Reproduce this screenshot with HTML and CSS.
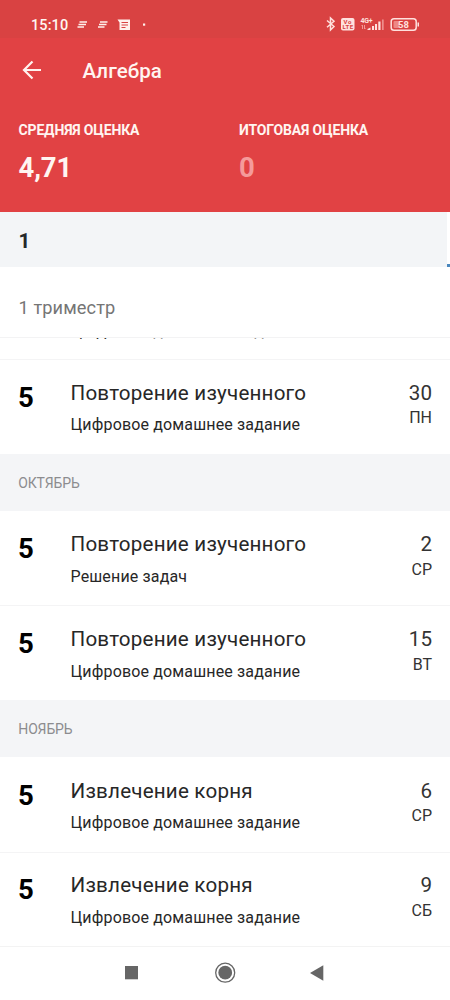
FILE: index.html
```html
<!DOCTYPE html>
<html lang="ru">
<head>
<meta charset="utf-8">
<title>Алгебра</title>
<link rel="stylesheet" href="styles.css">
</head>
<body>
<div class="screen">
  <header class="header">
    <div class="status">
      <span class="clock">15:10</span>
      <svg class="notices" width="72" height="16" viewBox="0 0 72 16">
        <g stroke="#fff0ec" stroke-width="1.5" fill="none">
          <path d="M2.500 5h7.500M1.500 7.500h7.500M.5 10h6.500M23 5h7.500M22 7.500h7.500M21 10h6.500"/>
        </g>
        <path fill="#fff0ec" d="M40.500 2.500H53v10.500H42.500V5.500z"/>
        <path stroke="#d94242" d="M44.500 5.500h6.500M44.500 8h6.500M44.500 10.500h4"/>
        <rect x="66" y="6.500" width="2.200" height="2.200" fill="#fff0ec"/>
      </svg>
      <svg class="system" width="96" height="18" viewBox="0 0 96 18">
        <path fill="none" stroke="#ffe1de" stroke-width="1.500" d="M3 5.500l7 6-3.500 3.500V3L10 6.200l-7 6"/>
        <rect x="17" y="3" width="13.500" height="12.500" rx="2" fill="#ffe1de"/>
        <g class="tiny volte"><text x="19.500" y="8.700" textLength="8">Vo</text><text x="18.500" y="14.200" textLength="10.500">LTE</text></g>
        <text class="tiny network" x="36.500" y="7.700" textLength="12">4G+</text>
        <path stroke="#f19a98" fill="none" d="M38.500 14V10M37.500 11l1-1M40.500 10v4l1-1"/>
        <path fill="#ffe1de" d="M43.500 15h3v-2.500l-3 1.500zM48 11h2v4h-2zM51 9h2v6h-2zM54.300 6.500h2.200V15h-2.200z"/>
        <path fill="#ee8d8b" d="M58 4.500h1.700V15H58z"/>
        <rect x="67.200" y="3.700" width="25" height="11.500" rx="2.800" fill="none" stroke="#ffe1de" stroke-width="1.500"/>
        <rect x="69.500" y="6" width="6" height="7" rx="1" fill="#ee8785"/>
        <path fill="#ffe1de" d="M93.500 7.500H95v4h-1.500z"/>
        <text class="battery" x="74" y="12.900" textLength="11">58</text>
      </svg>
    </div>
    <div class="toolbar">
      <svg class="back" width="20" height="20" viewBox="0 0 20 20"><path d="M19 10H2.500M10.500 1.500L2 10l8.500 8.500" fill="none" stroke="#fff3ef" stroke-width="2.200"/></svg>
      <h1 class="title">Алгебра</h1>
    </div>
    <div class="summary">
      <div class="metric"><div class="label">СРЕДНЯЯ ОЦЕНКА</div><div class="value">4,71</div></div>
      <div class="metric"><div class="label">ИТОГОВАЯ ОЦЕНКА</div><div class="value empty">0</div></div>
    </div>
  </header>
  <div class="tabs"><div class="tab">1</div><div class="next-tab"></div></div>
  <div class="term">1 триместр</div>
  <main class="list">
    <section class="peek"><div class="kind">Цифровое домашнее задание</div></section>
    <section class="row"><div class="mark">5</div><div class="lesson"><div class="topic">Повторение изученного</div><div class="kind">Цифровое домашнее задание</div></div><div class="date"><div class="day">30</div><div class="week">ПН</div></div></section>
    <h2 class="month">ОКТЯБРЬ</h2>
    <section class="row first"><div class="mark">5</div><div class="lesson"><div class="topic">Повторение изученного</div><div class="kind">Решение задач</div></div><div class="date"><div class="day">2</div><div class="week">СР</div></div></section>
    <section class="row"><div class="mark">5</div><div class="lesson"><div class="topic">Повторение изученного</div><div class="kind">Цифровое домашнее задание</div></div><div class="date"><div class="day">15</div><div class="week">ВТ</div></div></section>
    <h2 class="month">НОЯБРЬ</h2>
    <section class="row first"><div class="mark">5</div><div class="lesson"><div class="topic">Извлечение корня</div><div class="kind">Цифровое домашнее задание</div></div><div class="date"><div class="day">6</div><div class="week">СР</div></div></section>
    <section class="row"><div class="mark">5</div><div class="lesson"><div class="topic">Извлечение корня</div><div class="kind">Цифровое домашнее задание</div></div><div class="date"><div class="day">9</div><div class="week">СБ</div></div></section>
  </main>
  <nav class="nav">
    <svg width="450" height="53" viewBox="0 0 450 53"><g fill="#666"><path d="M125 19h13v13.300h-13z"/><circle cx="225.200" cy="25.700" r="6.900"/><path d="M310 26l13.300-7.700v15.400z"/></g><circle cx="225.200" cy="25.700" r="9.500" fill="none" stroke="#666" stroke-width="1.300"/></svg>
  </nav>
</div>
</body>
</html>
```
FILE: styles.css
```css
* { box-sizing: border-box; }
body { margin: 0; background: #fff; font-family: Roboto, sans-serif; }
svg { display: block; flex: none; }
.screen { width: 450px; height: 1000px; overflow: hidden; display: flex; flex-direction: column; }
.header { height: 212px; flex: none; background: #e14244; color: #fff5f1; }
.status { height: 38px; background: #d94242; display: flex; padding: 15px 29px 0 31px; }
.clock { font-size: 14.500px; line-height: 20px; padding-top: 1px; font-weight: 500; width: 46px; letter-spacing: .1px; }
.notices { margin-top: 2px; }
.system { margin-left: auto; margin-right: 1px; }
.tiny { font-size: 6px; font-weight: 700; fill: #ffe1de; }
.volte { fill: #d94242; }
.network { font-size: 7px; }
.battery { font-size: 9.500px; font-weight: 700; fill: #ffe1de; }
.toolbar { height: 66px; display: flex; align-items: center; padding: 0 0 1px 22px; }
.back { margin-top: -1px; }
.title { margin: 0 0 0 40.500px; font-size: 20.500px; line-height: 28px; font-weight: 500; letter-spacing: .1px; }
.summary { display: grid; grid-template-columns: 220.500px 1fr; padding: 17px 0 0 18.500px; }
.label { font-size: 14px; line-height: 18px; font-weight: 700; letter-spacing: -.15px; }
.value { font-size: 27.500px; line-height: 34px; margin-top: 12px; font-weight: 700; letter-spacing: -.1px; }
.empty { color: #f59a9b; }
.tabs { height: 55px; flex: none; display: flex; }
.tab { width: 447px; background: #f3f5f7; color: #25282a; font-weight: 700; font-size: 20.500px; line-height: 58px; padding-left: 18.500px; }
.next-tab { width: 3px; border-bottom: 3px solid #4a87bd; }
.term { height: 70px; flex: none; padding: 27px 18px 0 18.500px; font-size: 18.200px; line-height: 28px; color: #757575; letter-spacing: .1px; }
.list { height: 608.500px; flex: none; overflow: hidden; border-top: 1px solid #f3f3f4; }
.peek { display: flex; align-items: flex-start; height: 21px; padding-left: 70.500px; color: #272727; }
.peek .kind { margin-top: -17.500px; }
.row { height: 94.700px; display: flex; padding: 19.700px 18px 0; border-top: 1.500px solid #f4f4f5; }
.first { border-color: transparent; }
.mark { width: 52.500px; font-size: 27.500px; line-height: 34px; padding-top: 1px; font-weight: 700; color: #000; }
.lesson { flex: 1; color: #272727; }
.topic { font-size: 20.600px; line-height: 26px; letter-spacing: .2px; }
.kind { font-size: 16px; line-height: 20px; margin-top: 9.700px; letter-spacing: .15px; }
.date { text-align: right; color: #333; }
.day { font-size: 20.600px; line-height: 26px; }
.week { font-size: 16px; line-height: 20px; margin-top: 2.500px; }
.month { height: 57px; margin: 0; padding-left: 18.300px; background: #f4f5f7; color: #8c8c8f; font-size: 14px; line-height: 59px; font-weight: 400; letter-spacing: -.15px; }
.nav { flex: 1; background: #fff; border-top: 1.500px solid #f3f3f3; }
```
